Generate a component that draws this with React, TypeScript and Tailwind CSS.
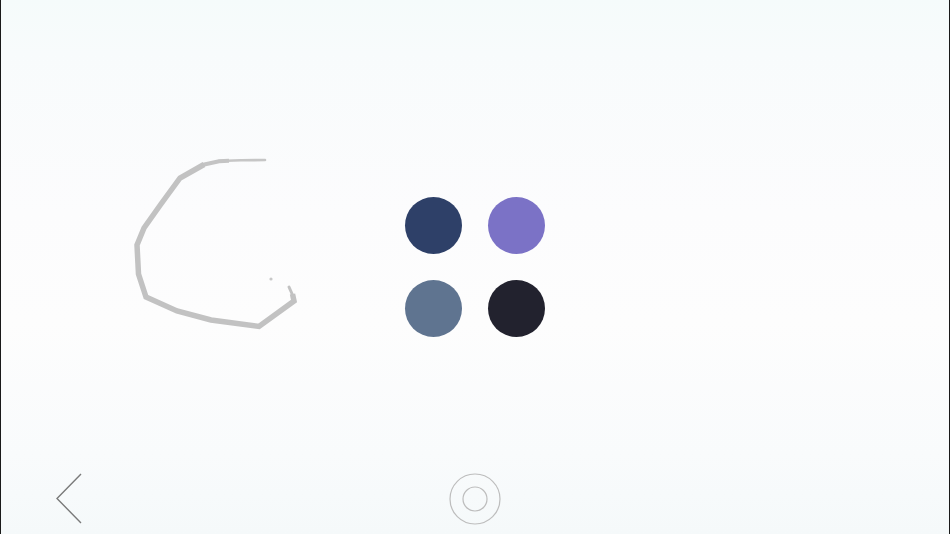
import React from 'react'

const SWATCHES = ['#2e4068', '#7b72c6', '#5f7490', '#22222e']

function Scribble() {
  return (
    <svg className="absolute left-0 top-0 pointer-events-none" width="950" height="534" viewBox="0 0 950 534">
      <path d="M264 160 L240 160.3 L218 161" fill="none" stroke="#c6c6c6" strokeWidth="2.6" strokeLinecap="round" />
      <path d="M228 160.8 L218 161.2 L201 165" fill="none" stroke="#c4c4c4" strokeWidth="4" />
      <path
        d="M203 164.5 L179 178 L160 204 L143 228 L136 245 L137.5 274 L145 297 L176 311 L210 320 L258 326.5 L293 301 L291.5 294"
        fill="none"
        stroke="#c2c2c2"
        strokeWidth="5.5"
        strokeLinejoin="miter"
      />
      <path d="M292 296 L288 287" fill="none" stroke="#c2c2c2" strokeWidth="3" strokeLinecap="round" />
      <circle cx="270" cy="279" r="1.6" fill="#c8c8c8" />
    </svg>
  )
}

export default function App() {
  return (
    <div className="relative w-[950px] h-[534px] overflow-hidden border-x border-[#1a1a1a] bg-[linear-gradient(to_bottom,#f5fbfb_0%,#f8fbfc_10%,#fcfcfd_40%,#fdfdfd_60%,#f9fbfc_85%,#f5f9fa_100%)]">
      <Scribble />

      <div className="flex h-full items-center justify-center">
        <div className="grid grid-cols-2 gap-[26px]">
          {SWATCHES.map((c) => (
            <button key={c} className="w-[57px] h-[57px] rounded-full" style={{ backgroundColor: c }} />
          ))}
        </div>
      </div>

      <div className="absolute inset-x-0 bottom-0 h-[70px] flex items-center justify-center">
        <button className="absolute left-[53px] top-[9px] w-[30px] h-[52px] flex items-center justify-center">
          <svg width="30" height="52" viewBox="0 0 30 52">
            <path d="M27 1 L3 25.5 L27 50" fill="none" stroke="#7a7a7a" strokeWidth="1.4" />
          </svg>
        </button>
        <button className="w-[52px] h-[52px] flex items-center justify-center">
          <svg width="52" height="52" viewBox="0 0 52 52">
            <circle cx="26" cy="26" r="25" fill="none" stroke="#bdbdbd" strokeWidth="1.2" />
            <circle cx="26" cy="26" r="12" fill="none" stroke="#bdbdbd" strokeWidth="1.2" />
          </svg>
        </button>
      </div>
    </div>
  )
}
